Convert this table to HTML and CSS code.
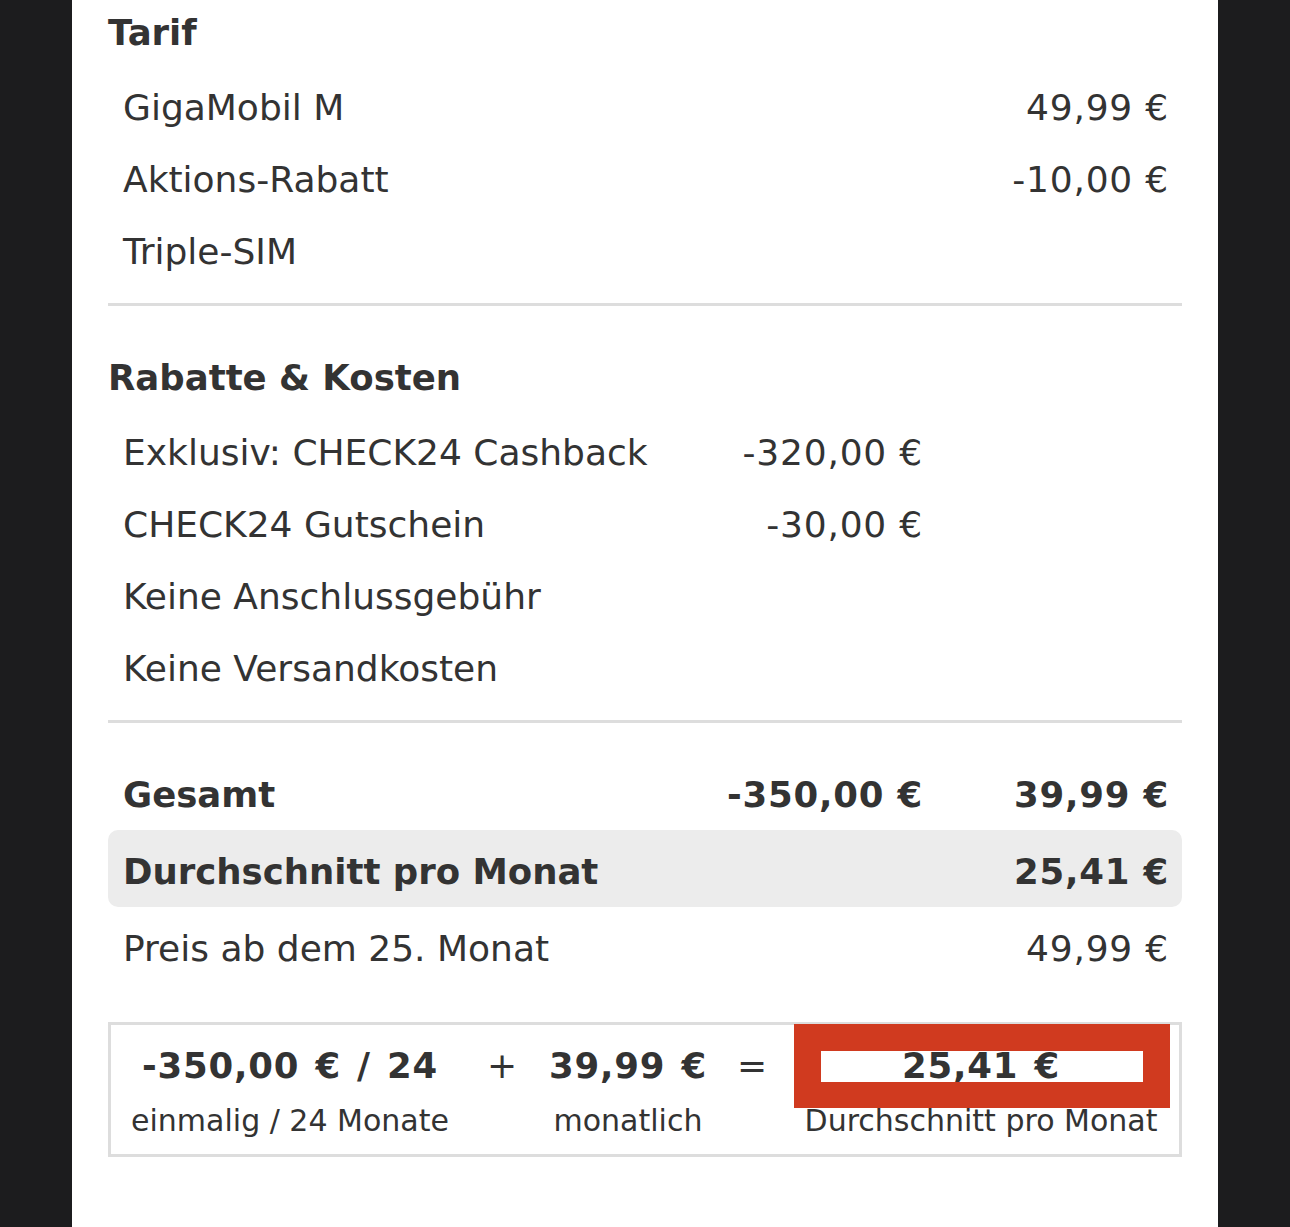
FILE: index.html
```html
<!DOCTYPE html>
<html lang="de">
<head>
<meta charset="utf-8">
<title>Tarifübersicht</title>
<link rel="stylesheet" href="styles.css">
</head>
<body>
<main class="page">
  <section class="section">
    <h2 class="head">Tarif</h2>
    <div class="row"><span class="label">GigaMobil M</span><span class="mid"></span><span class="val">49,99 €</span></div>
    <div class="row"><span class="label">Aktions-Rabatt</span><span class="mid"></span><span class="val">-10,00 €</span></div>
    <div class="row"><span class="label">Triple-SIM</span><span class="mid"></span><span class="val"></span></div>
  </section>

  <section class="section">
    <h2 class="head">Rabatte &amp; Kosten</h2>
    <div class="row"><span class="label">Exklusiv: CHECK24 Cashback</span><span class="mid">-320,00 €</span><span class="val"></span></div>
    <div class="row"><span class="label">CHECK24 Gutschein</span><span class="mid">-30,00 €</span><span class="val"></span></div>
    <div class="row"><span class="label">Keine Anschlussgebühr</span><span class="mid"></span><span class="val"></span></div>
    <div class="row"><span class="label">Keine Versandkosten</span><span class="mid"></span><span class="val"></span></div>
  </section>

  <section class="section totals">
    <div class="row sum strong"><span class="label">Gesamt</span><span class="mid">-350,00 €</span><span class="val">39,99 €</span></div>
    <div class="row sum strong avg"><span class="label">Durchschnitt pro Monat</span><span class="mid"></span><span class="val">25,41 €</span></div>
    <div class="row sum"><span class="label">Preis ab dem 25. Monat</span><span class="mid"></span><span class="val">49,99 €</span></div>
  </section>

  <div class="calc">
    <div class="calc-val">-350,00 € / 24</div>
    <div class="calc-op">+</div>
    <div class="calc-val">39,99 €</div>
    <div class="calc-op">=</div>
    <div class="calc-val result">25,41 €<span class="mark"></span></div>

    <div class="calc-lbl">einmalig / 24 Monate</div>
    <div class="calc-op"></div>
    <div class="calc-lbl">monatlich</div>
    <div class="calc-op"></div>
    <div class="calc-lbl">Durchschnitt pro Monat</div>
  </div>
</main>
</body>
</html>
```

FILE: styles.css
```css
html, body {
  margin: 0;
  padding: 0;
}

body {
  background: #1c1c1e;
  font-family: "DejaVu Sans", Verdana, sans-serif;
  color: #333333;
}

.page {
  background: #ffffff;
  margin: 0 72px;
  padding: 0 36px 60px;
  min-height: 100vh;
  box-sizing: border-box;
}

.section {
  padding: 39px 0 15px;
  border-bottom: 3px solid #dddddd;
}

.section:first-child {
  padding-top: 0;
}

.section.totals {
  padding: 30px 0 0;
  border-bottom: none;
}

.head {
  margin: 0 0 7px;
  font-size: 35.5px;
  font-weight: 700;
  line-height: 65px;
}

.row {
  display: grid;
  grid-template-columns: 1fr 260px 244px;
  padding: 0 13px 0 15px;
  font-size: 36px;
  line-height: 72px;
  white-space: nowrap;
}

.row .mid,
.row .val {
  text-align: right;
  letter-spacing: 0.8px;
}

.row .mid {
  padding-right: 2px;
}

.row.sum {
  padding-top: 7px;
  line-height: 70px;
}

.row.strong {
  font-weight: 700;
  font-size: 35.5px;
}

.row.avg {
  background: #ececec;
  border-radius: 10px;
}

.calc {
  margin-top: 38px;
  border: 3px solid #dddddd;
  padding: 16px 0 13px;
  display: grid;
  grid-template-columns: 358px 66px 186px 62px 396px;
  grid-template-rows: 50px 40px;
  row-gap: 10px;
  text-align: center;
  white-space: nowrap;
}

.calc-val {
  font-size: 35.5px;
  font-weight: 700;
  line-height: 50px;
  letter-spacing: 0.8px;
  word-spacing: 3px;
}

.calc-op {
  font-size: 36px;
  line-height: 50px;
}

.calc-lbl {
  font-size: 30px;
  line-height: 40px;
}

.result {
  position: relative;
}

.mark {
  position: absolute;
  left: 11px;
  top: -17px;
  width: 376px;
  height: 84px;
  box-sizing: border-box;
  border: 27px solid #d03a1f;
  border-bottom-width: 26px;
  pointer-events: none;
}
```
